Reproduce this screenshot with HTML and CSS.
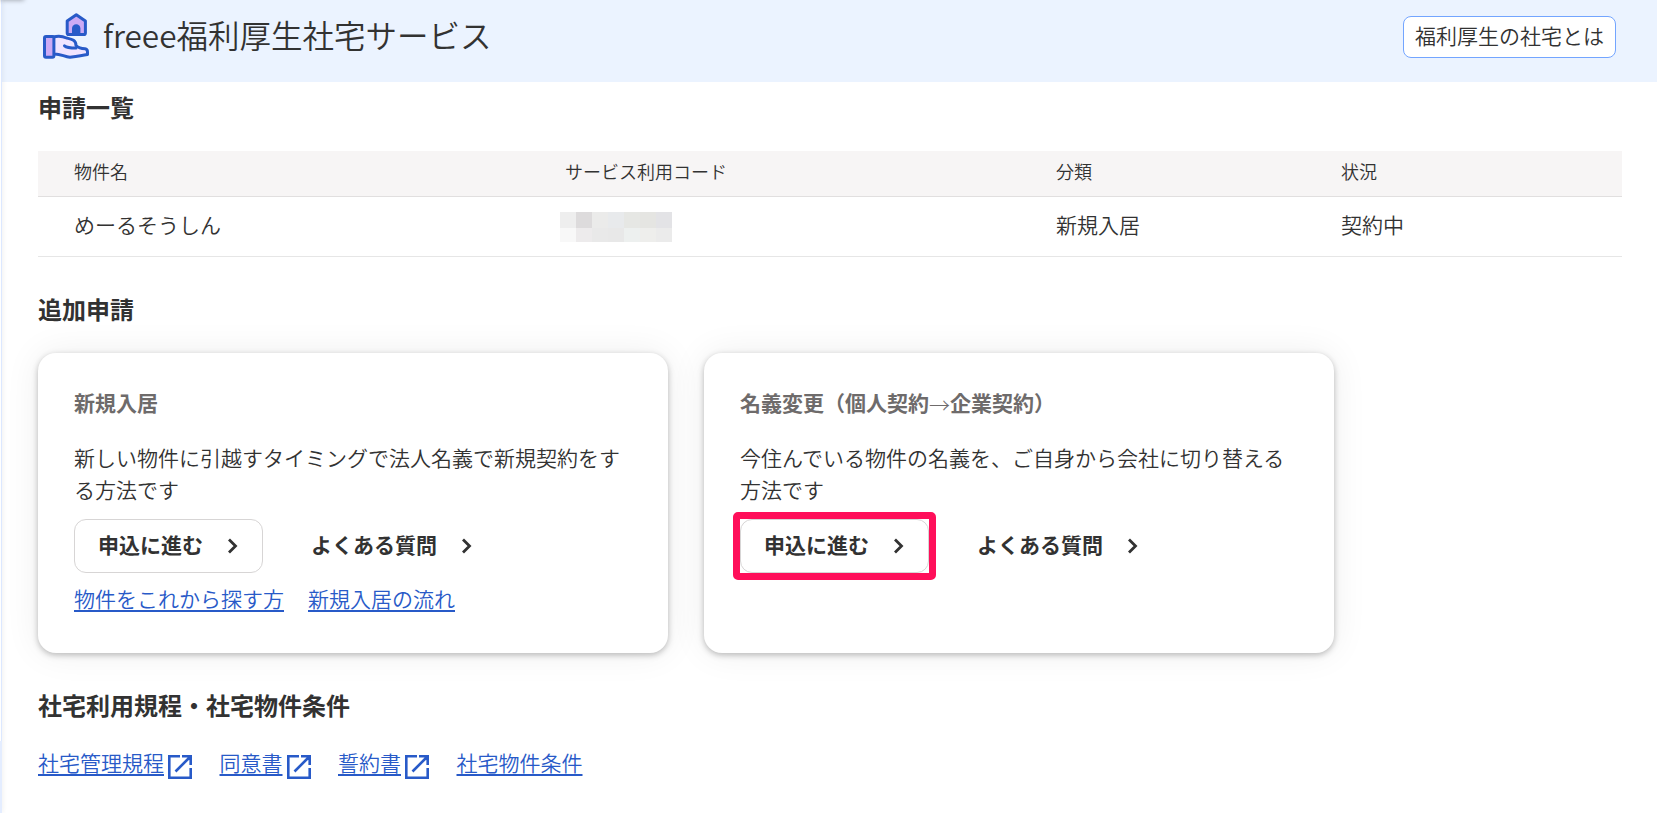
FILE: index.html
```html
<!DOCTYPE html>
<html lang="ja">
<head>
  <meta charset="UTF-8" />
  <title>freee福利厚生社宅サービス</title>
  <link rel="stylesheet" href="styles.css">
</head>
<body>

<div class="side-edge"></div>
<div class="side-tab"></div>

<header class="header">
  <svg class="logo" viewBox="0 0 46 46" fill="none" stroke="#285ac8" stroke-width="3" stroke-linejoin="round" stroke-linecap="round">
    <path fill="#ccaaf5" d="M33.3 1.7 L42.4 8 V20 Q42.4 21.6 40.8 21.6 H25.8 Q24.2 21.6 24.2 20 V8 Z" />
    <path fill="#285ac8" stroke="none" d="M29 22 V15.5 a4.2 4.2 0 0 1 8.4 0 V22 Z" />
    <path fill="#f0e4ff" d="M10.5 24 C16 22.6 20 23.4 23.5 25 C29 26.3 33 27 33 32.5 C36 35.5 39 35.7 42 35.7 Q44.5 36 44.5 39 V41.5 C39 42.5 33 43.4 27 44.3 C21 43.6 17 40.5 10.5 41 Z" />
    <path d="M21.5 32.8 C24 35 28 35 33 35" />
    <rect fill="#ccaaf5" x="1.5" y="23.5" width="9.4" height="20.8" rx="1.5" />
  </svg>
  <h1 class="title">freee福利厚生社宅サービス</h1>
  <a class="about-button">福利厚生の社宅とは</a>
</header>

<main class="main">
  <h2 class="heading">申請一覧</h2>

  <table class="list">
    <thead>
      <tr>
        <th class="col-name">物件名</th>
        <th class="col-code">サービス利用コード</th>
        <th class="col-type">分類</th>
        <th>状況</th>
      </tr>
    </thead>
    <tbody>
      <tr>
        <td>めーるそうしん</td>
        <td class="code">
          <svg class="masked" viewBox="0 0 112 30" shape-rendering="crispEdges">
            <rect x="0" y="0" width="16" height="16" fill="#eeeeee" />
            <rect x="16" y="0" width="16" height="16" fill="#dddbdc" />
            <rect x="32" y="0" width="16" height="16" fill="#ebebea" />
            <rect x="48" y="0" width="16" height="16" fill="#e8eaec" />
            <rect x="64" y="0" width="16" height="16" fill="#e6e7e4" />
            <rect x="80" y="0" width="16" height="16" fill="#e5e5e2" />
            <rect x="96" y="0" width="16" height="16" fill="#e3e3e6" />
            <rect x="0" y="16" width="16" height="14" fill="#f8f8f8" />
            <rect x="16" y="16" width="16" height="14" fill="#edebec" />
            <rect x="32" y="16" width="16" height="14" fill="#e9e9e9" />
            <rect x="48" y="16" width="16" height="14" fill="#e8e8e8" />
            <rect x="64" y="16" width="16" height="14" fill="#edf0ef" />
            <rect x="80" y="16" width="16" height="14" fill="#eeeeec" />
            <rect x="96" y="16" width="16" height="14" fill="#ebebeb" />
          </svg>
        </td>
        <td>新規入居</td>
        <td>契約中</td>
      </tr>
    </tbody>
  </table>

  <h2 class="heading heading-add">追加申請</h2>

  <div class="cards">
    <section class="card">
      <h3 class="card-title">新規入居</h3>
      <p class="card-text">新しい物件に引越すタイミングで法人名義で新規契約をする方法です</p>
      <div class="actions">
        <a class="button button-border">申込に進む
          <svg class="chevron" viewBox="0 0 12 16"><path d="M2 1.5 L8.5 8 L2 14.5" /></svg>
        </a>
        <a class="button">よくある質問
          <svg class="chevron" viewBox="0 0 12 16"><path d="M2 1.5 L8.5 8 L2 14.5" /></svg>
        </a>
      </div>
      <div class="card-links">
        <a class="link">物件をこれから探す方</a>
        <a class="link">新規入居の流れ</a>
      </div>
    </section>

    <section class="card">
      <h3 class="card-title">名義変更（個人契約<span class="arrow">→</span>企業契約）</h3>
      <p class="card-text">今住んでいる物件の名義を、ご自身から会社に切り替える方法です</p>
      <div class="actions">
        <a class="button button-border highlight">申込に進む
          <svg class="chevron" viewBox="0 0 12 16"><path d="M2 1.5 L8.5 8 L2 14.5" /></svg>
        </a>
        <a class="button">よくある質問
          <svg class="chevron" viewBox="0 0 12 16"><path d="M2 1.5 L8.5 8 L2 14.5" /></svg>
        </a>
      </div>
    </section>
  </div>

  <h2 class="heading heading-rules">社宅利用規程・社宅物件条件</h2>

  <div class="rules">
    <div class="rule"><a class="link">社宅管理規程</a><svg class="external" viewBox="0 0 24 24"><path d="M12 1.3 H1.3 V22.7 H22.7 V13 M14 1.3 H22.7 V10 M22 2 L7.5 16.5" /></svg></div>
    <div class="rule"><a class="link">同意書</a><svg class="external" viewBox="0 0 24 24"><path d="M12 1.3 H1.3 V22.7 H22.7 V13 M14 1.3 H22.7 V10 M22 2 L7.5 16.5" /></svg></div>
    <div class="rule"><a class="link">誓約書</a><svg class="external" viewBox="0 0 24 24"><path d="M12 1.3 H1.3 V22.7 H22.7 V13 M14 1.3 H22.7 V10 M22 2 L7.5 16.5" /></svg></div>
    <div class="rule"><a class="link">社宅物件条件</a></div>
  </div>
</main>

</body>
</html>
```
FILE: styles.css
```css
* {
  box-sizing: border-box;
}

body {
  margin: 0;
  height: 813px;
  overflow: hidden;
  background: #fff;
  color: #323232;
  font-family: "Noto Sans CJK JP", sans-serif;
  font-size: 21px;
  font-weight: 350;
  line-height: 32px;
}

h1, h2, h3, p {
  margin: 0;
}

/* edge of the side menu */
.side-edge {
  position: absolute;
  left: 0;
  top: 0;
  width: 2px;
  height: 813px;
  background: linear-gradient(to right, #fff 1px, #dce8ff 1px);
  box-shadow: 0 0 5px rgba(0, 0, 0, 0.12);
}

.side-edge::after {
  content: "";
  position: absolute;
  left: 0;
  bottom: 0;
  width: 2px;
  height: 72px;
  background: #e4edff;
}

.side-tab {
  position: absolute;
  left: 0;
  top: -4px;
  width: 24px;
  height: 4px;
  box-shadow: 0 0 5px rgba(0, 0, 0, 0.4);
}

.header {
  display: flex;
  align-items: center;
  height: 82px;
  padding: 0 41px 10px 43px;
  background: #ebf3ff;
}

.logo {
  width: 46px;
  height: 46px;
}

.title {
  margin: -4px 0 0 14px;
  font-size: 31.5px;
  font-weight: 350;
  line-height: 46px;
}

.about-button {
  display: flex;
  align-items: center;
  justify-content: center;
  width: 213px;
  height: 42px;
  margin: 2px 0 0 auto;
  padding-bottom: 5px;
  border: 1px solid #73a5ff;
  border-radius: 8px;
  background: #fff;
}

.main {
  padding: 7px 35px 0 38px;
}

.heading {
  font-size: 24px;
  font-weight: 700;
  line-height: 36px;
}

.list {
  width: 100%;
  margin-top: 26px;
  border-collapse: separate;
  border-spacing: 0;
  table-layout: fixed;
}

.list th {
  height: 46px;
  padding: 0 0 4px 36px;
  border-bottom: 1px solid #e1dfdf;
  background: #f7f5f5;
  font-size: 18px;
  font-weight: 350;
  line-height: 27px;
  text-align: left;
}

.list td {
  height: 60px;
  padding: 0 0 5px 36px;
  border-bottom: 1px solid #e6e6e6;
}

.list .code {
  padding-bottom: 0;
}

.col-name, .col-code {
  width: 491px;
}

.col-type {
  width: 285px;
}

.masked {
  display: block;
  width: 112px;
  height: 30px;
  margin-left: -5px;
}

.heading-add {
  margin-top: 34px;
}

.cards {
  display: flex;
  gap: 36px;
  margin-top: 26px;
}

.card {
  width: 630px;
  height: 300px;
  padding: 33px 36px;
  border-radius: 18px;
  background: #fff;
  box-shadow: 0 0 36px rgba(0, 0, 0, 0.07), 0 2px 6px rgba(0, 0, 0, 0.26);
}

.card-title {
  color: #6e6b6b;
  font-size: 21px;
  font-weight: 700;
  line-height: 32px;
}

.card-text {
  width: 550px;
  margin-top: 23px;
}

.arrow {
  font-weight: 300;
  position: relative;
  top: 2px;
}

.actions {
  display: flex;
  gap: 24px;
  margin-top: 14px;
}

.button {
  display: flex;
  align-items: center;
  gap: 24px;
  height: 54px;
  padding: 0 23px 5px;
  border: 1px solid transparent;
  border-radius: 12px;
  font-weight: 700;
  white-space: nowrap;
}

.button-border {
  width: 189px;
  border-color: #d7d5d5;
}

.highlight {
  position: relative;
}

.highlight::after {
  content: "";
  position: absolute;
  box-sizing: border-box;
  left: -8px;
  top: -8px;
  width: 203px;
  height: 68px;
  border: 7px solid #ff0f5a;
  border-radius: 5px;
}

.chevron {
  flex-shrink: 0;
  width: 12px;
  height: 16px;
  margin-top: 4px;
  fill: none;
  stroke: #323232;
  stroke-width: 2.8;
}

.card-links {
  display: flex;
  gap: 24px;
  margin-top: 9px;
}

.link {
  color: #285ac8;
  text-decoration: underline;
  text-decoration-thickness: 2px;
  text-underline-offset: 3px;
}

.heading-rules {
  margin-top: 34px;
}

.rules {
  display: flex;
  gap: 27.5px;
  margin-top: 23px;
}

.rule {
  display: flex;
}

.external {
  width: 24px;
  height: 24px;
  margin: 9px 0 0 4px;
  fill: none;
  stroke: #285ac8;
  stroke-width: 2.6;
}
```
